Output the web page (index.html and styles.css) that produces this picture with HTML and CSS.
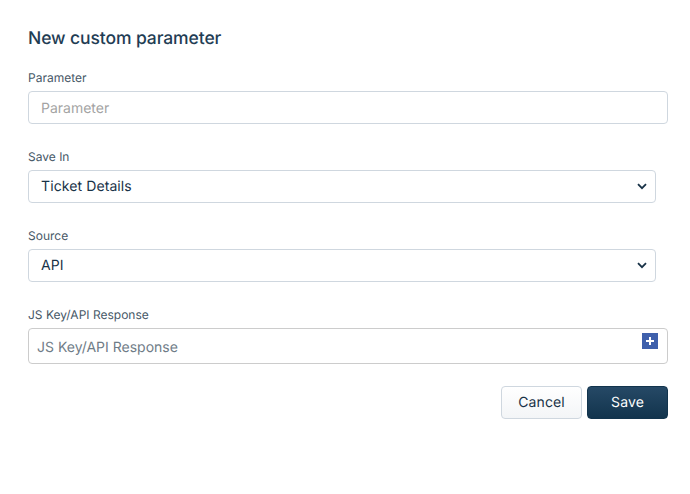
FILE: index.html
```html
<!DOCTYPE html>
<html lang="en">
<head>
    <meta charset="UTF-8">
    <title>New custom parameter</title>
    <link rel="stylesheet" href="styles.css">
</head>
<body>
    <form class="modal">
        <h1 class="title">New custom parameter</h1>

        <div class="field">
            <label class="label" for="parameter">Parameter</label>
            <input class="control" type="text" id="parameter" placeholder="Parameter">
        </div>

        <div class="field">
            <label class="label" for="save-in">Save In</label>
            <div class="select">
                <span class="select-value" id="save-in">Ticket Details</span>
                <svg class="chevron" width="10" height="7" viewBox="0 0 10 7"><path d="M1 1.2 5 5.2 9 1.2" fill="none" stroke="#183247" stroke-width="1.8"/></svg>
            </div>
        </div>

        <div class="field">
            <label class="label" for="source">Source</label>
            <div class="select">
                <span class="select-value" id="source">API</span>
                <svg class="chevron" width="10" height="7" viewBox="0 0 10 7"><path d="M1 1.2 5 5.2 9 1.2" fill="none" stroke="#183247" stroke-width="1.8"/></svg>
            </div>
        </div>

        <div class="field">
            <label class="label" for="response">JS Key/API Response</label>
            <div class="response-wrap">
                <input class="response" type="text" id="response" placeholder="JS Key/API Response">
                <span class="add-btn">
                    <svg width="10" height="10" viewBox="0 0 10 10"><path d="M5 1V9M1 5H9" fill="none" stroke="#fff" stroke-width="2"/></svg>
                </span>
            </div>
        </div>

        <div class="actions">
            <button class="btn btn-cancel" type="button">Cancel</button>
            <button class="btn btn-save" type="submit">Save</button>
        </div>
    </form>
</body>
</html>
```

FILE: styles.css
```css
body {
    margin: 0;
    font-family: Inter, "Liberation Sans", sans-serif;
    background: #fff;
    color: #183247;
    text-rendering: geometricPrecision;
}
.modal {
    padding: 28px 22px 0 28px;
}
.title {
    margin: 0 0 19px;
    font-size: 17.5px;
    line-height: 22px;
    font-weight: 500;
    letter-spacing: -0.1px;
    color: #1f3d54;
}
.field {
    margin-bottom: 24px;
}
.label {
    display: block;
    font-size: 12px;
    line-height: 18px;
    margin-bottom: 4px;
    color: #475867;
}
.control {
    display: block;
    width: 100%;
    height: 33px;
    padding: 2px 12px 0;
    box-sizing: border-box;
    border: 1px solid #cfd7df;
    border-radius: 4px;
    font: 14px Inter, "Liberation Sans", sans-serif;
    text-rendering: geometricPrecision;
}
.control::placeholder {
    color: #a3a3a3;
    opacity: 1;
}
.select {
    display: flex;
    align-items: center;
    justify-content: space-between;
    width: 628px;
    height: 33px;
    padding: 0 8px 0 12px;
    box-sizing: border-box;
    border: 1px solid #cfd7df;
    border-radius: 4px;
}
.select-value {
    font-size: 14px;
    font-weight: 400;
    letter-spacing: 0.1px;
    margin-top: -1px;
}
.response-wrap {
    position: relative;
}
.response {
    display: block;
    width: 100%;
    height: 36px;
    padding: 2px 8px 0;
    box-sizing: border-box;
    border: 1px solid #cccccc;
    border-radius: 4px;
    font: 14px Inter, "Liberation Sans", sans-serif;
    text-rendering: geometricPrecision;
}
.response::placeholder {
    color: #6f7c87;
    opacity: 1;
}
.add-btn {
    position: absolute;
    top: 5px;
    right: 10px;
    width: 16px;
    height: 16px;
    display: flex;
    align-items: center;
    justify-content: center;
    background: #3f60ac;
}
.actions {
    display: flex;
    justify-content: flex-end;
    gap: 5px;
    margin-top: -2px;
}
.btn {
    width: 81px;
    height: 33px;
    border-radius: 4px;
    font: 400 14px Inter, "Liberation Sans", sans-serif;
    letter-spacing: 0.1px;
    text-rendering: geometricPrecision;
    cursor: pointer;
}
.btn-cancel {
    border: 1px solid #cfd7df;
    background: linear-gradient(#fff, #f3f5f7);
    color: #183247;
}
.btn-save {
    border: 1px solid #12344d;
    background: linear-gradient(#264966, #12344d);
    color: #fff;
}
```
